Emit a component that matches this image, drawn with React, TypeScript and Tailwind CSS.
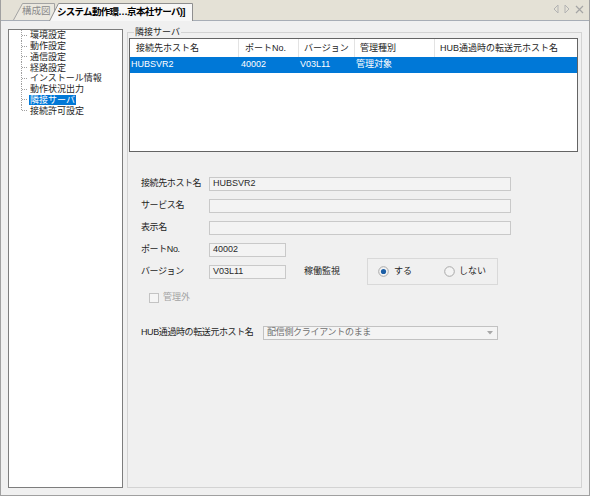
import React from "react";

const font = { fontFamily: '"Liberation Sans", "Noto Sans CJK JP", sans-serif' };

const treeItems = [
  "環境設定",
  "動作設定",
  "通信設定",
  "経路設定",
  "インストール情報",
  "動作状況出力",
  "隣接サーバ",
  "接続許可設定",
];

function TreeRow({ label, last, selected }: { label: string; last: boolean; selected: boolean }) {
  return (
    <div className="flex h-[10.75px] items-center">
      <svg width="20" height="11" className="shrink-0" viewBox="0 0 20 11">
        <line x1="12.5" y1="0" x2="12.5" y2={last ? 5.5 : 11} stroke="#a0a0a0" strokeDasharray="1 1" />
        <line x1="13" y1="5.5" x2="19" y2="5.5" stroke="#a0a0a0" strokeDasharray="1 1" />
      </svg>
      <span
        className={`px-[1px] text-[9px] leading-[10px] whitespace-nowrap ${
          selected ? "bg-[#0078d7] text-white" : "text-[#1e1e1e]"
        }`}
      >
        {label}
      </span>
    </div>
  );
}

function Field({ label, value, width }: { label: string; value?: string; width: string }) {
  return (
    <div className="flex h-[14px] items-center">
      <span className="w-[68px] shrink-0 whitespace-nowrap text-[9px] tracking-[-0.4px] text-[#1e1e1e]">{label}</span>
      <div className={`${width} flex h-[14px] items-center border border-[#c9c9c9] bg-[#f3f3f3] pl-[3px] text-[9px] text-[#2a2a2a]`}>
        {value}
      </div>
    </div>
  );
}

function Radio({ checked }: { checked: boolean }) {
  return (
    <svg width="11" height="11" viewBox="0 0 11 11" className="shrink-0">
      <circle cx="5.5" cy="5.5" r="4.8" fill="#f4f4f4" stroke="#a8a8a8" />
      {checked && <circle cx="5.5" cy="5.5" r="2.6" fill="#1d5fa6" />}
    </svg>
  );
}

export default function App() {
  return (
    <div
      className="flex h-[496px] w-[590px] flex-col border-x border-b border-[#a0a0a0] bg-[#f0f0f0] text-[#1e1e1e]"
      style={font}
    >
      {/* tab strip */}
      <div className="relative flex h-[21px] shrink-0 items-end border-b border-[#a7adb6] bg-[#e4e1d6] pl-[12px]">
        <div className="relative h-[17px] w-[42px]">
          <svg className="absolute inset-0" width="42" height="17" viewBox="0 0 42 17">
            <path d="M0.5 17 L9.5 0.5 H41.5 V17" fill="#ebe8df" stroke="#a3a3a3" />
          </svg>
          <span className="relative block pl-[9px] pt-[2px] text-[9.5px] leading-[12px] text-[#8a8a8a]">構成図</span>
        </div>
        <div className="relative z-10 -mb-px -ml-[6px] h-[18px] w-[144px]">
          <svg className="absolute inset-0" width="144" height="18" viewBox="0 0 144 18">
            <path d="M0.5 18 L9.5 0.5 H143.5 V18" fill="#f7f7f7" stroke="#8f8f8f" />
          </svg>
          <span className="relative block whitespace-nowrap pl-[8px] pt-[2px] text-[9.5px] font-bold leading-[13px] tracking-[-0.7px] text-black">
            システム動作環…京本社サーバ)]
          </span>
        </div>
        <div className="absolute right-[5px] top-[4px] flex items-center gap-[5px]">
          <svg width="6" height="10" viewBox="0 0 6 10">
            <path d="M5 1 L1 5 L5 9 Z" fill="none" stroke="#b3b3b3" />
          </svg>
          <svg width="6" height="10" viewBox="0 0 6 10">
            <path d="M1 1 L5 5 L1 9 Z" fill="none" stroke="#b3b3b3" />
          </svg>
          <svg width="9" height="9" viewBox="0 0 9 9">
            <path d="M1 1 L8 8 M8 1 L1 8" stroke="#a5a5a5" strokeWidth="1.2" />
          </svg>
        </div>
      </div>

      {/* body */}
      <div className="flex min-h-0 flex-1 gap-[4px] pb-[7px] pl-[7px] pr-[7px] pt-[8px]">
        <div className="w-[115px] shrink-0 border border-[#7d7d7d] bg-white">
          {treeItems.map((t, i) => (
            <TreeRow key={t} label={t} last={i === treeItems.length - 1} selected={t === "隣接サーバ"} />
          ))}
        </div>

        <fieldset className="-mt-[2px] min-w-0 flex-1 border border-[#d3d3d3] px-[1px] pb-0">
          <legend className="ml-[5px] px-[1px] text-[9px] leading-[11px] text-[#1e1e1e]">隣接サーバ</legend>

          <div className="mr-[2px] h-[114px] border border-[#646464] bg-white text-[9px]">
            <div className="flex h-[18px] items-center text-[#1e1e1e]">
              <div className="w-[109px] border-r border-[#e3e3e3] pl-[6px] leading-[18px]">接続先ホスト名</div>
              <div className="w-[60px] border-r border-[#e3e3e3] pl-[6px] leading-[18px]">ポートNo.</div>
              <div className="w-[56px] border-r border-[#e3e3e3] pl-[5px] leading-[18px]">バージョン</div>
              <div className="w-[80px] border-r border-[#e3e3e3] pl-[5px] leading-[18px]">管理種別</div>
              <div className="flex-1 pl-[5px] leading-[18px]">HUB通過時の転送元ホスト名</div>
            </div>
            <div className="flex h-[16px] items-center bg-[#0078d7] text-white">
              <div className="w-[109px] pl-[1px]">HUBSVR2</div>
              <div className="w-[60px] pl-[2px]">40002</div>
              <div className="w-[56px] pl-[1px]">V03L11</div>
              <div className="w-[80px] pl-[1px]">管理対象</div>
              <div className="flex-1" />
            </div>
          </div>

          <div className="mt-[25px] flex flex-col pl-[12px]">
            <Field label="接続先ホスト名" value="HUBSVR2" width="w-[302px]" />
            <div className="mt-[8px]">
              <Field label="サービス名" width="w-[302px]" />
            </div>
            <div className="mt-[8px]">
              <Field label="表示名" width="w-[302px]" />
            </div>
            <div className="mt-[8px]">
              <Field label="ポートNo." value="40002" width="w-[77px]" />
            </div>
            <div className="mt-[1px] flex items-center">
              <Field label="バージョン" value="V03L11" width="w-[77px]" />
              <span className="ml-[18px] w-[63px] whitespace-nowrap text-[9px]">稼働監視</span>
              <div className="flex h-[27px] w-[131px] items-center whitespace-nowrap border border-[#d9d9d9] pl-[10px] text-[9px]">
                <Radio checked />
                <span className="ml-[5px]">する</span>
                <span className="ml-[32px]" />
                <Radio checked={false} />
                <span className="ml-[4px]">しない</span>
              </div>
            </div>
            <div className="ml-[8px] mt-[8px] flex h-[10px] items-center">
              <div className="h-[10px] w-[10px] border border-[#c3c3c3] bg-[#f5f5f5]" />
              <span className="ml-[4px] text-[9px] text-[#a3a3a3]">管理外</span>
            </div>
            <div className="mt-[23px] flex h-[14px] items-center">
              <span className="w-[122px] shrink-0 whitespace-nowrap text-[9px] tracking-[-0.4px]">HUB通過時の転送元ホスト名</span>
              <div className="flex h-[14px] w-[235px] items-center justify-between border border-[#c2c2c2] bg-[#f4f4f4] pl-[3px] pr-[4px] text-[9px] text-[#707070]">
                <span className="tracking-[-0.3px]">配信側クライアントのまま</span>
                <svg width="6" height="4" viewBox="0 0 6 4">
                  <path d="M0 0 H6 L3 3.5 Z" fill="#a8a8a8" />
                </svg>
              </div>
            </div>
          </div>
        </fieldset>
      </div>
    </div>
  );
}
